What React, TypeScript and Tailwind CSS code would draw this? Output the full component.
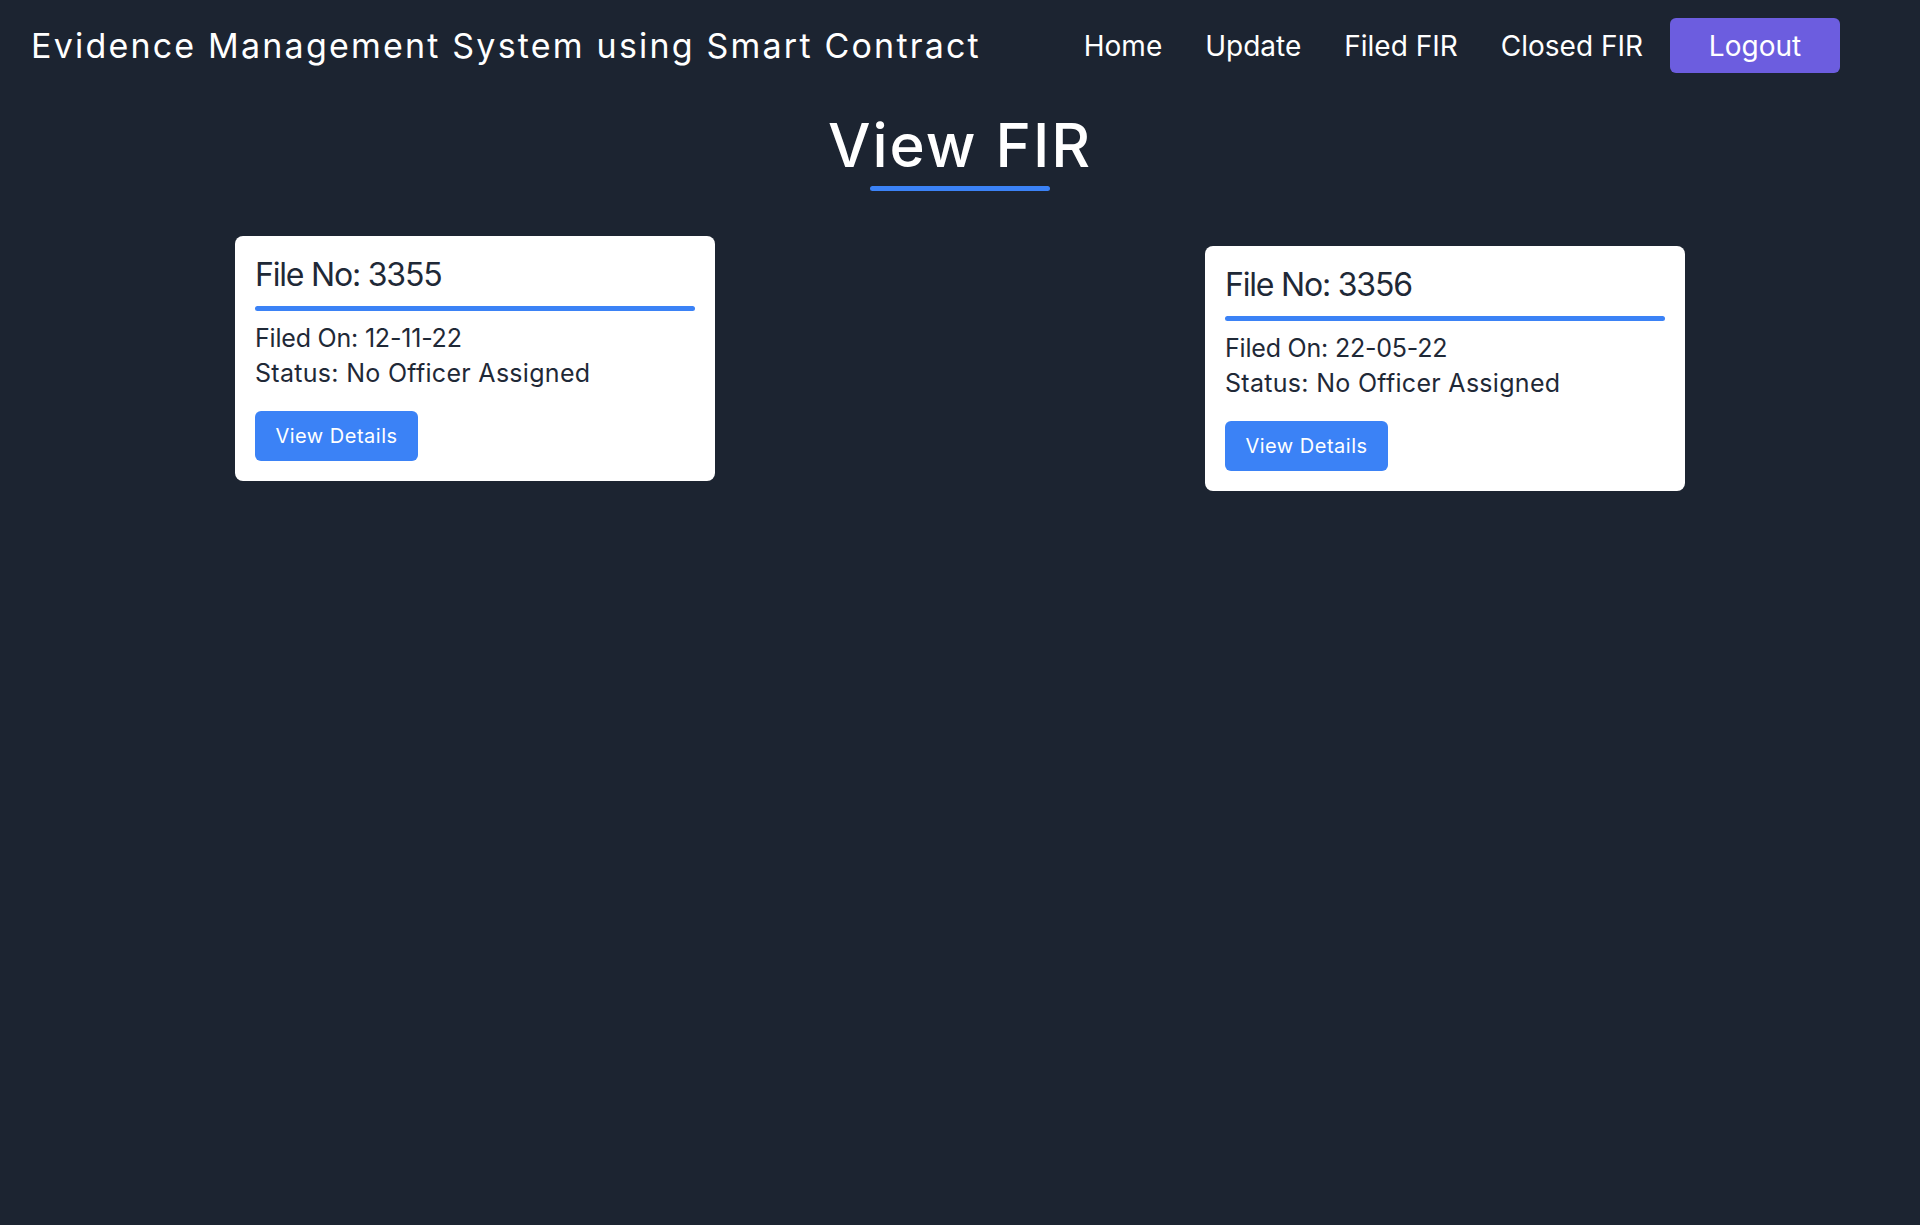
import React from "react";

const font = { fontFamily: "Inter, 'Noto Sans', sans-serif" };

function Card({ no, date, className = "" }: { no: string; date: string; className?: string }) {
  return (
    <div className={`w-[480px] bg-white rounded-[8px] px-5 pt-[19px] pb-5 text-[#1f2937] ${className}`}>
      <div className="text-[32px] leading-[40px] tracking-[-1.2px]">File No: {no}</div>
      <div className="mt-[11px] h-[5px] rounded-full bg-[#3b82f6]" />
      <div className="mt-[10px] text-[25px] leading-[35px] tracking-[-0.2px]">Filed On: {date}</div>
      <div className="text-[25px] leading-[35px] tracking-[0.3px]">Status: No Officer Assigned</div>
      <button className="mt-5 h-[50px] w-[163px] rounded-[6px] bg-[#3b82f6] text-white text-[20px] tracking-[0.5px]">
        View Details
      </button>
    </div>
  );
}

export default function App() {
  return (
    <div className="min-h-[1225px] w-full bg-[#1c2431] text-white" style={font}>
      <nav className="flex items-center justify-between h-[91px] pl-[31px] pr-[80px]">
        <div className="text-[34px] leading-none tracking-[2.2px]">Evidence Management System using Smart Contract</div>
        <div className="flex items-center">
          <div className="flex items-center gap-[43px] text-[28px] leading-none">
            <span>Home</span>
            <span>Update</span>
            <span>Filed FIR</span>
            <span>Closed FIR</span>
          </div>
          <button className="ml-[27px] h-[55px] w-[170px] rounded-[6px] bg-[#6c5ddf] text-[28px] text-white">
            Logout
          </button>
        </div>
      </nav>
      <div className="flex flex-col items-center mt-[24px]">
        <h1 className="text-[60px] leading-[60px] font-medium tracking-[2px]">View FIR</h1>
        <div className="mt-[11px] h-[5px] w-[180px] rounded-full bg-[#3b82f6]" />
      </div>
      <div className="mt-[45px] flex justify-center items-start gap-[490px]">
        <Card no="3355" date="12-11-22" />
        <Card no="3356" date="22-05-22" className="mt-[10px]" />
      </div>
    </div>
  );
}
